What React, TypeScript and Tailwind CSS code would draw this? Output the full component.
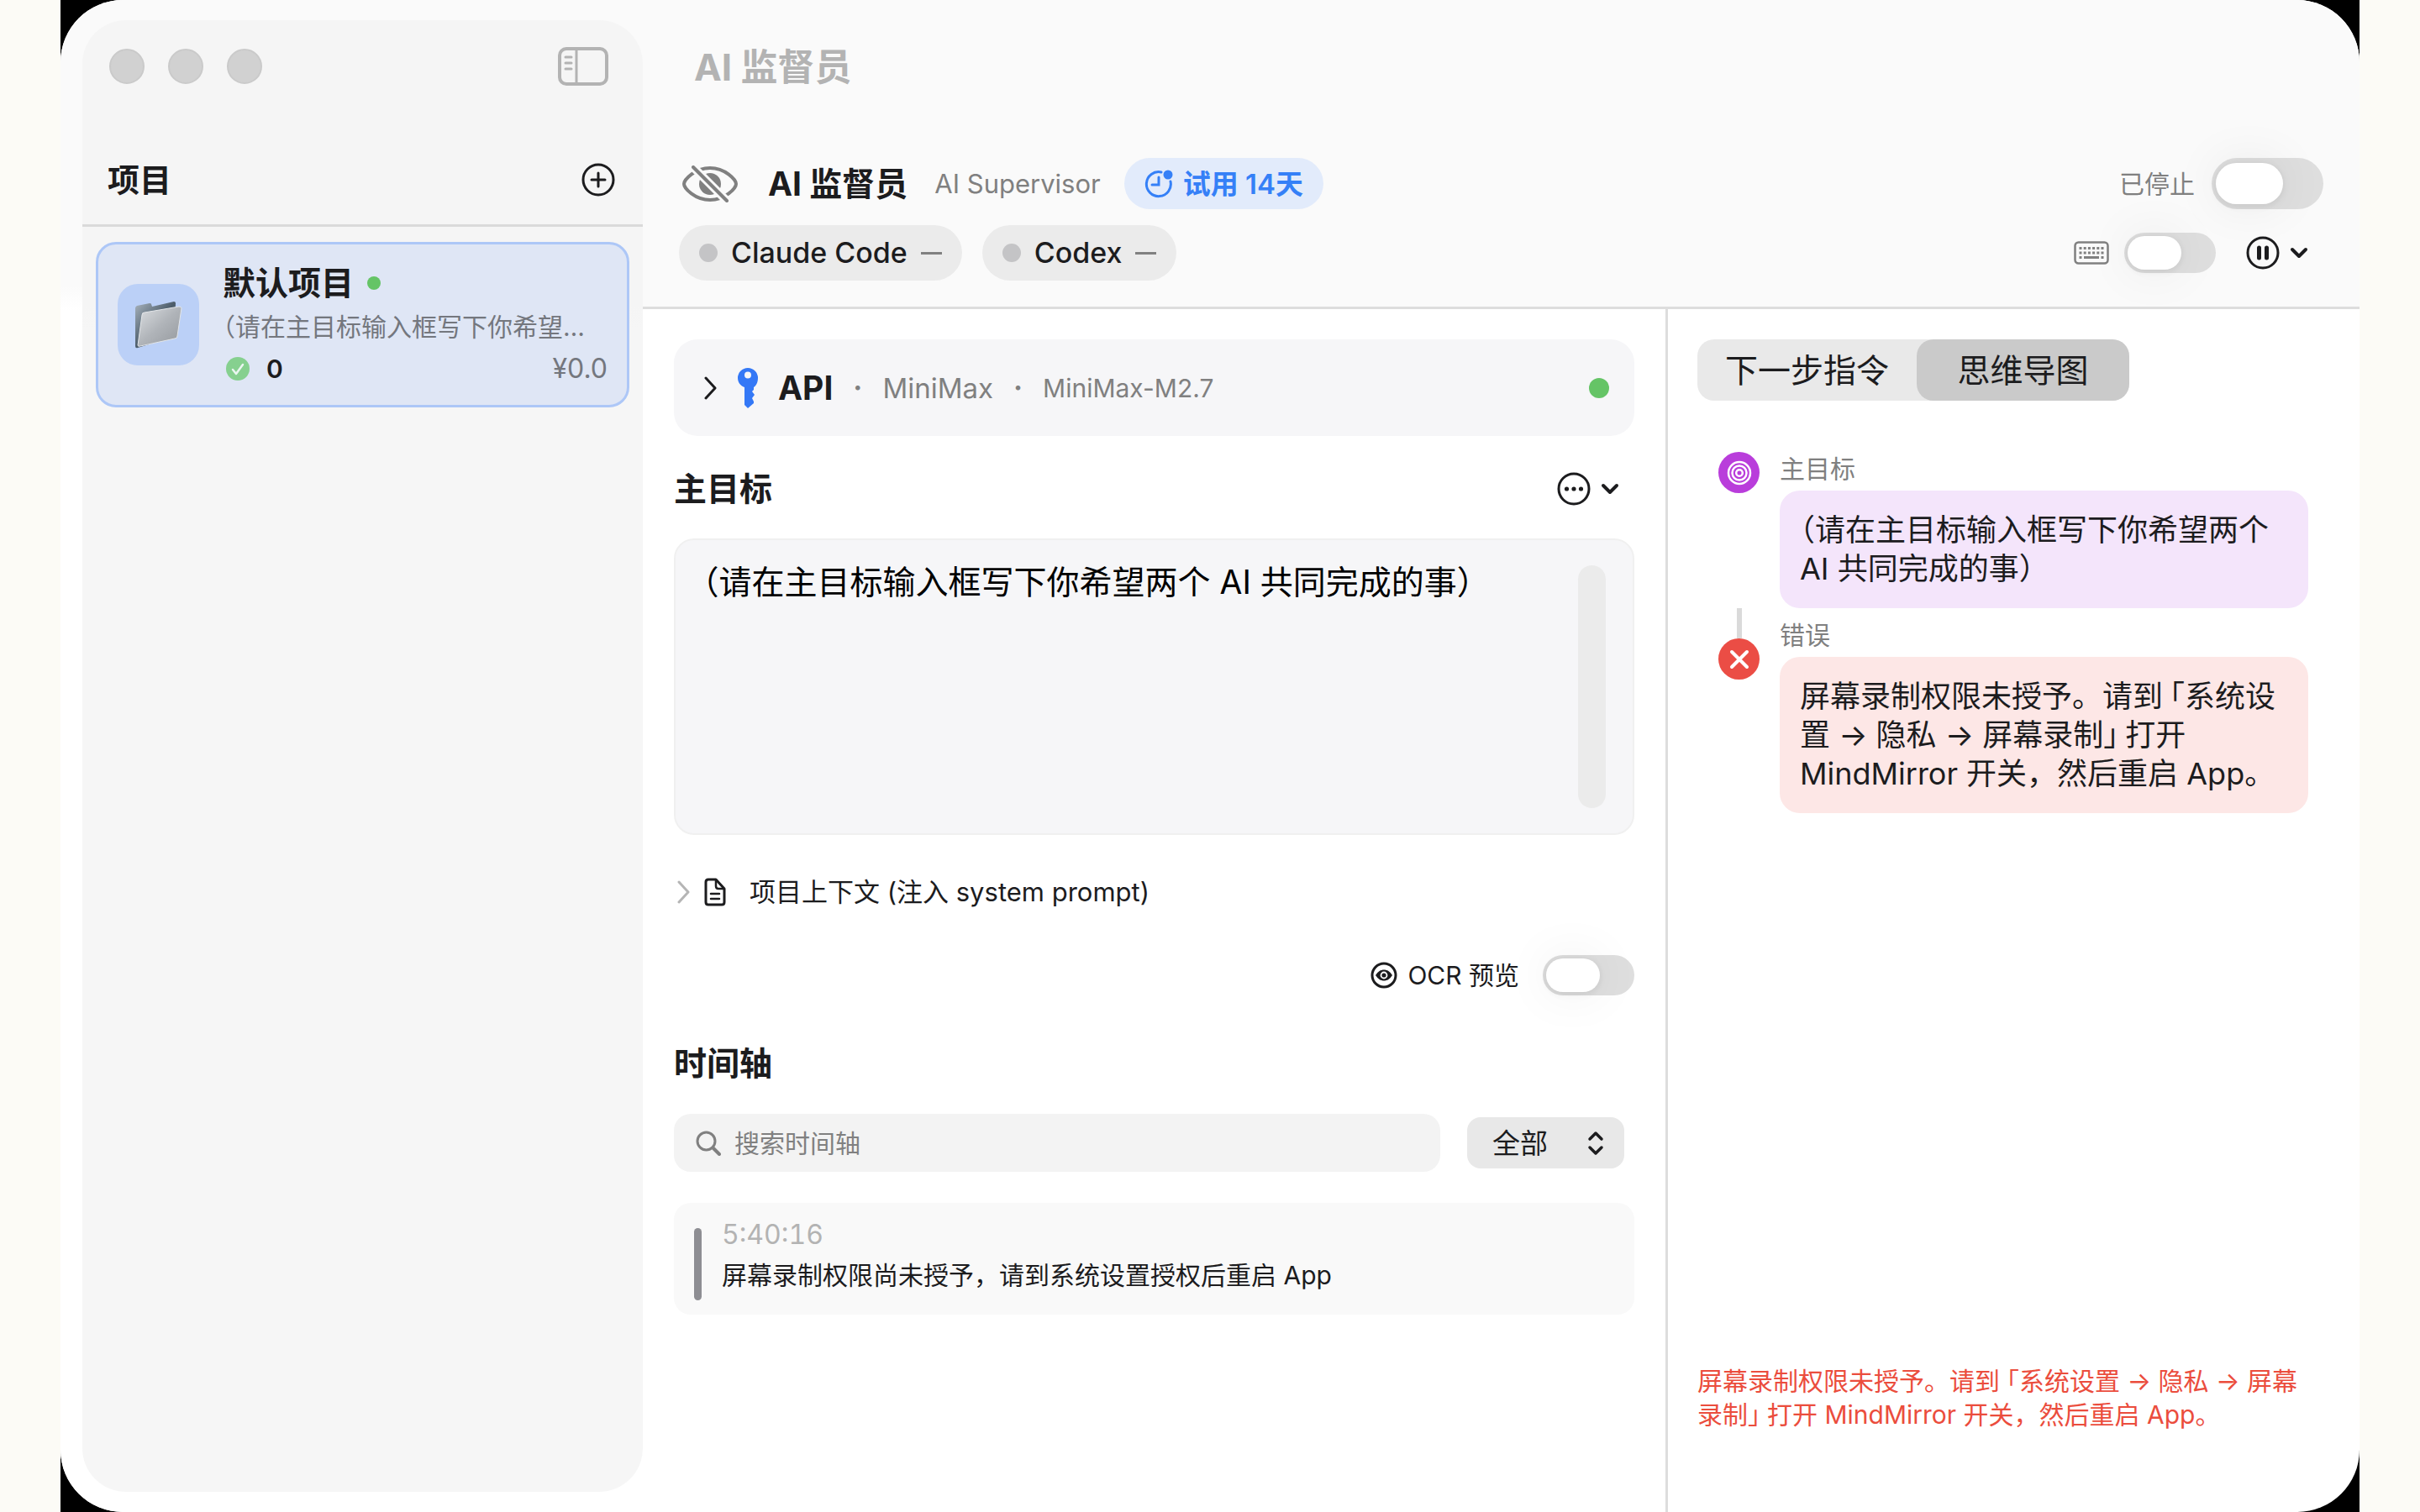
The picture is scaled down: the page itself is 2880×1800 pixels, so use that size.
import { useState } from "react"
import type { ReactNode } from "react"

const GOAL = "（请在主目标输入框写下你希望两个 AI 共同完成的事）"

function SidebarIcon() {
  return (
    <svg viewBox="0 0 60 46" className="h-[46px] w-[60px]" fill="none" stroke="currentColor">
      <rect x="2" y="2" width="56" height="42" rx="8" strokeWidth="4" />
      <path d="M22 3v40" strokeWidth="3" />
      <path d="M9 12h7M9 19h7M9 26h7" strokeWidth="3" strokeLinecap="round" />
    </svg>
  )
}

function PlusCircle() {
  return (
    <svg viewBox="0 0 40 40" className="size-10" fill="none" stroke="currentColor" strokeWidth="3" strokeLinecap="round">
      <circle cx="20" cy="20" r="18" />
      <path d="M20 12v16M12 20h16" />
    </svg>
  )
}

function FolderIcon() {
  return (
    <svg viewBox="0 0 60 60" className="size-[60px]">
      <defs>
        <linearGradient id="folderBack" x1="0" y1="0" x2="1" y2="1">
          <stop offset="0" stopColor="#a9b4be" />
          <stop offset="0.5" stopColor="#4d5d6b" />
          <stop offset="1" stopColor="#33424f" />
        </linearGradient>
        <linearGradient id="folderFront" x1="0" y1="0" x2="1" y2="1">
          <stop offset="0" stopColor="#dcdfe2" />
          <stop offset="0.5" stopColor="#b0b4b9" />
          <stop offset="1" stopColor="#94989d" />
        </linearGradient>
      </defs>
      <path d="M2 10q0-2 2-3l15-3q2 0 2 1l1 3 26-6q2 0 2 2l-2 40L5 57q-3 1-3-2z" fill="url(#folderBack)" />
      <path d="M10 18q0-3 3-3l41-7q3 0 3 2l-5 33q0 3-3 3L8 55q-3 1-3-1z" fill="url(#folderFront)" stroke="#e3e6e9" strokeWidth="1" />
    </svg>
  )
}

function EyeSlash() {
  return (
    <svg viewBox="0 0 66 44" className="h-11 w-[66px]" fill="none" stroke="currentColor" strokeWidth="4" strokeLinecap="round">
      <path d="M2 22C2 17 15 3 33 3s31 14 31 19-13 19-31 19S2 27 2 22z" />
      <circle cx="33" cy="22" r="13" fill="currentColor" stroke="none" />
      <path d="M12 1l42 42" stroke="#fafafa" strokeWidth="10" strokeLinecap="butt" />
      <path d="M13 2l40 40" />
    </svg>
  )
}

function ClockBadge() {
  return (
    <svg viewBox="0 0 34 34" className="size-[34px]" fill="none" stroke="currentColor" strokeWidth="3" strokeLinecap="round">
      <path d="M20 3a14.500 14.500 0 1 0 11 11" />
      <path d="M17 9v9H9" />
      <circle cx="28" cy="6" r="5.500" fill="currentColor" stroke="none" />
    </svg>
  )
}

function KeyboardIcon() {
  return (
    <svg viewBox="0 0 42 28" className="h-7 w-[42px]" fill="none" stroke="currentColor">
      <rect x="1.500" y="1.500" width="39" height="25" rx="4" strokeWidth="2.500" />
      <path d="M6.500 8.500h29M6.500 14h29" strokeWidth="3" strokeDasharray="3 2.200" />
      <path d="M6.500 19.500h3M12 19.500h18M32.500 19.500h3" strokeWidth="3" />
    </svg>
  )
}

function PauseCircle() {
  return (
    <svg viewBox="0 0 40 40" className="size-10" fill="none" stroke="currentColor" strokeWidth="3">
      <circle cx="20" cy="20" r="18" />
      <path d="M15.500 14v12M24.500 14v12" strokeWidth="5" strokeLinecap="round" />
    </svg>
  )
}

function MoreCircle() {
  return (
    <svg viewBox="0 0 40 40" className="size-10" fill="none" stroke="currentColor" strokeWidth="3">
      <circle cx="20" cy="20" r="18" />
      <g fill="currentColor" stroke="none">
        <circle cx="11.500" cy="20" r="2.600" />
        <circle cx="20" cy="20" r="2.600" />
        <circle cx="28.500" cy="20" r="2.600" />
      </g>
    </svg>
  )
}

function ChevronDown() {
  return (
    <svg viewBox="0 0 22 16" className="h-4 w-[22px]" fill="none" stroke="currentColor" strokeWidth="4" strokeLinecap="round" strokeLinejoin="round">
      <path d="M3 4l8 8 8-8" />
    </svg>
  )
}

function ChevronRight() {
  return (
    <svg viewBox="0 0 16 28" className="h-7 w-4" fill="none" stroke="currentColor" strokeWidth="3" strokeLinecap="round" strokeLinejoin="round">
      <path d="M2 2l11 12L2 26" />
    </svg>
  )
}

function KeyIcon() {
  return (
    <svg viewBox="0 0 24 48" className="h-12 w-6" fill="currentColor">
      <path
        fillRule="evenodd"
        d="M12 0a12 12 0 0 1 12 12c0 5-2 9-5 11v3l-2 2 3 4-3 4 2 4v2l-7 6-4-4V23C3 21 0 17 0 12A12 12 0 0 1 12 0zm0 4.500a4 4 0 1 0 0 8 4 4 0 0 0 0-8z"
      />
    </svg>
  )
}

function DocIcon() {
  return (
    <svg viewBox="0 0 26 34" className="h-[34px] w-[26px]" fill="none" stroke="currentColor" strokeWidth="3" strokeLinejoin="round" strokeLinecap="round">
      <path d="M5 2h9l10 11v16q0 3-3 3H5q-3 0-3-3V5q0-3 3-3z" />
      <path d="M14 3v7q0 3 3 3h6M8 19h10M8 25h10" strokeWidth="2.500" />
    </svg>
  )
}

function EyeCircle() {
  return (
    <svg viewBox="0 0 32 32" className="size-8" fill="none" stroke="currentColor" strokeWidth="3">
      <circle cx="16" cy="16" r="14" />
      <path d="M6 16c3-4.500 6-6.500 10-6.500s7 2 10 6.500c-3 4.500-6 6.500-10 6.500S9 20.500 6 16z" fill="currentColor" stroke="none" />
      <circle cx="16" cy="16" r="3.500" stroke="#ffffff" strokeWidth="1.800" />
    </svg>
  )
}

function SearchIcon() {
  return (
    <svg viewBox="0 0 30 30" className="size-[30px]" fill="none" stroke="currentColor" strokeWidth="3" strokeLinecap="round">
      <circle cx="12.500" cy="12.500" r="10.500" />
      <path d="M20.500 20.500L28 28" strokeWidth="4" />
    </svg>
  )
}

function UpDown() {
  return (
    <svg viewBox="0 0 20 30" className="h-[30px] w-5" fill="none" stroke="currentColor" strokeWidth="3.500" strokeLinecap="round" strokeLinejoin="round">
      <path d="M3 10l7-7 7 7M3 20l7 7 7-7" />
    </svg>
  )
}

function TargetIcon() {
  return (
    <svg viewBox="0 0 30 30" className="size-[30px]" fill="none" stroke="currentColor" strokeWidth="2.500">
      <circle cx="15" cy="15" r="13" />
      <circle cx="15" cy="15" r="8.500" />
      <circle cx="15" cy="15" r="3.800" />
    </svg>
  )
}

function CrossIcon() {
  return (
    <svg viewBox="0 0 24 24" className="size-6" fill="none" stroke="currentColor" strokeWidth="4" strokeLinecap="round">
      <path d="M3 3l18 18M21 3L3 21" />
    </svg>
  )
}

function Switch({ label, large = false }: { label: string; large?: boolean }) {
  const [on, setOn] = useState(false)
  const size = large
    ? "h-[61px] w-[133px] before:left-[5px] before:top-[6px] before:h-[49px] before:w-20 checked:before:left-12"
    : "h-12 w-[109px] before:left-1 before:top-1 before:h-10 before:w-16 checked:before:left-10"
  return (
    <input
      type="checkbox"
      role="switch"
      aria-label={label}
      checked={on}
      onChange={(e) => setOn(e.target.checked)}
      className={`relative shrink-0 appearance-none rounded-full bg-[#dedede] before:absolute before:rounded-full before:bg-white before:shadow-[0_0_60px_rgba(0,0,0,0.08),0_2px_8px_rgba(0,0,0,0.08)] checked:bg-[#3478f6] ${size}`}
    />
  )
}

function Chip({ name }: { name: string }) {
  return (
    <button type="button" className="flex h-[66px] items-center rounded-full bg-[#ebebeb] px-6">
      <span className="size-[22px] rounded-full bg-[#c4c4c6]" />
      <span className="ml-4 text-[34px] font-medium leading-11">{name}</span>
      <span className="ml-4 h-[3px] w-[25px] bg-[#808080]" />
    </button>
  )
}

function Half({ children, className = "" }: { children: ReactNode; className?: string }) {
  return <span className={`[font-feature-settings:'halt'] ${className}`}>{children}</span>
}

function PermissionError() {
  return (
    <>
      屏幕录制权限未授予。请到<Half className="ml-2">「</Half>系统设置 → 隐私 → 屏幕录制
      <Half className="mr-2">」</Half>打开 MindMirror 开关，然后重启 App。
    </>
  )
}

function Sidebar() {
  return (
    <div className="flex bg-[linear-gradient(#fafafa_340px,#ffffff_370px)] pb-6 pl-[26px] pt-6">
      <aside className="w-[667px] rounded-[52px] bg-[linear-gradient(#f5f5f5_340px,#f6f6f6_370px)]">
        <div className="flex items-center pl-8 pr-[41px] pt-8">
          <div className="flex gap-7">
            <span className="size-[42px] rounded-full border-2 border-[#cacaca] bg-[#d1d1d1]" />
            <span className="size-[42px] rounded-full border-2 border-[#cacaca] bg-[#d1d1d1]" />
            <span className="size-[42px] rounded-full border-2 border-[#cacaca] bg-[#d1d1d1]" />
          </div>
          <button type="button" aria-label="边栏" className="ml-auto text-[#b3b3b3]">
            <SidebarIcon />
          </button>
        </div>

        <div className="mt-[84px] flex h-14 items-center justify-between pl-[30px] pr-[33px]">
          <h2 className="text-[38px] font-bold leading-14">项目</h2>
          <button type="button" aria-label="新建项目">
            <PlusCircle />
          </button>
        </div>
        <div className="mt-[25px] h-[3px] bg-[#dadada]" />

        <a href="#project" className="mx-4 mt-[18px] flex h-[197px] items-center gap-7 rounded-3xl border-3 border-[#adc7f7] bg-[#dfe6f5] px-[23px]">
          <span className="flex size-[97px] shrink-0 items-center justify-center rounded-3xl bg-[#bbd0f7]">
            <FolderIcon />
          </span>
          <span className="min-w-0 flex-1">
            <span className="flex items-center gap-4 text-[39px] font-semibold leading-12">
              默认项目
              <span className="size-4 rounded-full bg-[#65c466]" />
            </span>
            <span className="mt-[6px] block truncate text-[30px] leading-11 text-[#74777e] [font-feature-settings:'halt']">{GOAL}</span>
            <span className="mt-[6px] flex items-center text-[32px] leading-11">
              <svg viewBox="0 0 28 28" className="ml-1 size-7" fill="none">
                <circle cx="14" cy="14" r="14" fill="#86d08f" />
                <path d="M8 15l4 5 8-11" stroke="#eaf6f0" strokeWidth="2.500" strokeLinecap="round" strokeLinejoin="round" />
              </svg>
              <span className="ml-5 text-[30px] font-semibold">0</span>
              <span className="ml-auto text-[#74777e]">¥0.0</span>
            </span>
          </span>
        </a>
      </aside>
    </div>
  )
}

function Header() {
  return (
    <header className="border-b-3 border-[#dddddd] bg-[#fafafa] px-[43px] pb-[31px] pt-[52px]">
      <div className="pl-[18px] text-[44px] font-bold leading-14 text-[#b3b3b3]">AI 监督员</div>
      <div className="mt-20 flex h-[61px] items-center">
        <span className="ml-1 text-[#808080]">
          <EyeSlash />
        </span>
        <h1 className="ml-9 text-[39px] font-bold leading-14">AI 监督员</h1>
        <span className="ml-8 text-[31px] leading-10 text-[#808080]">AI Supervisor</span>
        <button type="button" className="ml-7 flex h-[61px] items-center gap-3 rounded-full bg-[#e2ebfb] px-6 text-[33px] font-semibold leading-11 text-[#3580f7]">
          <ClockBadge />
          试用 14天
        </button>
        <span className="ml-auto mr-5 text-[30px] leading-10 text-[#808080]">已停止</span>
        <Switch label="已停止" large />
      </div>
      <div className="mt-[19px] flex items-center">
        <div className="flex gap-6">
          <Chip name="Claude Code" />
          <Chip name="Codex" />
        </div>
        <span className="ml-auto mr-[18px] text-[#808080]">
          <KeyboardIcon />
        </span>
        <Switch label="键盘" />
        <button type="button" aria-label="暂停" className="ml-9 mr-[18px] flex items-center gap-3">
          <PauseCircle />
          <ChevronDown />
        </button>
      </div>
    </header>
  )
}

function Workspace() {
  return (
    <main className="min-w-0 flex-1 px-[37px] pt-9">
      <button type="button" className="flex h-[115px] w-full items-center rounded-[28px] bg-[#f6f6f8] pl-9 pr-[30px]">
        <ChevronRight />
        <span className="ml-6 text-[#3478f6]">
          <KeyIcon />
        </span>
        <span className="ml-6 text-[39px] font-bold leading-14">API</span>
        <span className="ml-6 text-[33px] font-bold text-[#808080]">·</span>
        <span className="ml-6 text-[33px] leading-11 text-[#808080]">MiniMax</span>
        <span className="ml-6 text-[33px] font-bold text-[#808080]">·</span>
        <span className="ml-6 text-[30px] leading-11 text-[#808080]">MiniMax-M2.7</span>
        <span className="ml-auto size-6 rounded-full bg-[#65c466]" />
      </button>

      <div className="mt-[35px] flex h-14 items-center justify-between pr-[18px]">
        <h2 className="text-[39px] font-bold leading-14">
          <label htmlFor="goal">主目标</label>
        </h2>
        <button type="button" aria-label="更多" className="flex items-center gap-3">
          <MoreCircle />
          <ChevronDown />
        </button>
      </div>
      <div className="mt-[31px] flex h-[353px] rounded-3xl border-2 border-[#f0f0f0] bg-[#f6f6f8] px-8 py-[30px]">
        <textarea
          id="goal"
          defaultValue={GOAL}
          className="flex-1 resize-none overflow-hidden bg-transparent text-[39px] leading-10 text-black [font-feature-settings:'halt'] focus:outline-none"
        />
        <div className="w-[33px] rounded-full bg-[#ebebeb]" />
      </div>

      <button type="button" className="mt-12 flex h-10 items-center pl-1">
        <span className="text-[#b5b5b5]">
          <ChevronRight />
        </span>
        <span className="ml-4">
          <DocIcon />
        </span>
        <span className="ml-7 text-[31px] leading-10">项目上下文 (注入 system prompt)</span>
      </button>

      <div className="mt-[55px] flex items-center justify-end">
        <EyeCircle />
        <span className="ml-3 mr-7 text-[30px] leading-10">OCR 预览</span>
        <Switch label="OCR 预览" />
      </div>

      <h2 className="mt-[53px] text-[39px] font-bold leading-14">时间轴</h2>
      <div className="mt-8 flex items-center gap-8 pr-3">
        <label className="flex h-[69px] flex-1 items-center gap-4 rounded-[20px] bg-[#f3f3f3] px-[26px] text-[#808080]">
          <SearchIcon />
          <input
            type="text"
            aria-label="搜索时间轴"
            placeholder="搜索时间轴"
            className="min-w-0 flex-1 bg-transparent text-[30px] leading-10 placeholder:text-[#808080] focus:outline-none"
          />
        </label>
        <div className="relative">
          <select aria-label="筛选" className="h-[61px] w-[187px] appearance-none rounded-2xl bg-[#e8e8e8] pl-[30px] text-[33px] leading-11">
            <option>全部</option>
          </select>
          <span className="pointer-events-none absolute right-6 top-4">
            <UpDown />
          </span>
        </div>
      </div>

      <div className="mt-[37px] flex h-[133px] gap-6 rounded-[20px] bg-[#f9f9f9] px-6 pt-[18px]">
        <span className="mt-3 h-[86px] w-[9px] rounded-full bg-[#8e8e93]" />
        <div>
          <div className="text-[32px] leading-10 text-[#b3b3b3] tabular-nums">5:40:16</div>
          <p className="mt-[6px] text-[30px] leading-11">屏幕录制权限尚未授予，请到系统设置授权后重启 App</p>
        </div>
      </div>
    </main>
  )
}

function Inspector() {
  const [tab, setTab] = useState("mindmap")
  const tabStyle = (id: string) =>
    tab === id ? "rounded-[20px] bg-[#cacaca] text-[39px] leading-14" : "rounded-[20px] text-[39px] leading-14"
  return (
    <section className="flex w-[826px] flex-col border-l-3 border-[#dddddd] pb-24 pt-9">
      <div role="tablist" className="ml-[35px] grid h-[73px] w-[514px] grid-cols-[261px_1fr] rounded-[20px] bg-[#e9e9e9]">
        <button type="button" role="tab" aria-selected={tab === "next"} onClick={() => setTab("next")} className={tabStyle("next")}>
          下一步指令
        </button>
        <button type="button" role="tab" aria-selected={tab === "mindmap"} onClick={() => setTab("mindmap")} className={tabStyle("mindmap")}>
          思维导图
        </button>
      </div>

      <div className="mt-[61px] pl-[60px] pr-[61px]">
        <div className="flex gap-6">
          <span className="flex size-[49px] shrink-0 items-center justify-center rounded-full bg-[#b93ddb] text-white">
            <TargetIcon />
          </span>
          <div className="flex-1">
            <div className="text-[30px] leading-10 text-[#808080]">主目标</div>
            <p className="mt-[6px] rounded-3xl bg-[#f4e5fb] p-6 text-[36px] leading-[46px] [font-feature-settings:'halt']">{GOAL}</p>
          </div>
        </div>
        <div className="flex gap-6">
          <div className="flex w-[49px] shrink-0 flex-col items-center">
            <span className="h-9 w-[6px] bg-[#dadada]" />
            <span className="flex size-[49px] items-center justify-center rounded-full bg-[#eb4d45] text-white">
              <CrossIcon />
            </span>
          </div>
          <div className="flex-1 pt-3">
            <div className="text-[30px] leading-10 text-[#808080]">错误</div>
            <p className="mt-[6px] rounded-3xl bg-[#fde7e6] p-6 text-[36px] leading-[46px]">
              <PermissionError />
            </p>
          </div>
        </div>
      </div>

      <p className="mt-auto pl-[35px] pr-[60px] text-[30px] leading-10 text-[#eb4d3d]">
        <PermissionError />
      </p>
    </section>
  )
}

export default function App() {
  return (
    <div className="flex min-h-screen bg-[#fcfbf6] px-[2.5%] font-['Inter','Noto_Sans_CJK_SC',sans-serif] text-[#1c1c1e]">
      <div className="flex flex-1 bg-black">
        <div className="flex flex-1 overflow-hidden rounded-[74px] bg-white">
          <Sidebar />
          <div className="flex min-w-0 flex-1 flex-col">
            <Header />
            <div className="flex flex-1">
              <Workspace />
              <Inspector />
            </div>
          </div>
        </div>
      </div>
    </div>
  )
}
